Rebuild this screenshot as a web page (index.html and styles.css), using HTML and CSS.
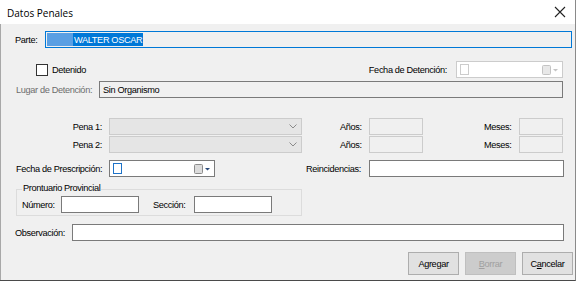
FILE: index.html
```html
<!DOCTYPE html>
<html lang="es">
<head>
    <meta charset="UTF-8">
    <title>Datos Penales</title>
    <link rel="stylesheet" href="styles.css">
</head>
<body>
    <div class="window">
        <div class="titlebar">
            <span class="title">Datos Penales</span>
            <svg class="close" width="12" height="12" viewBox="0 0 12 12">
                <path d="M1 1 L11 11 M11 1 L1 11" stroke="#222" stroke-width="1.1" fill="none"/>
            </svg>
        </div>

        <div class="content">
            <div class="row row-parte">
                <span class="lbl w-parte">Parte:</span>
                <div class="box focus w-parte-box">
                    <span class="sel"><span class="blur"></span>WALTER OSCAR</span>
                </div>
            </div>

            <div class="row row-det">
                <span class="check"></span>
                <span class="lbl chk-lbl">Detenido</span>
                <span class="spacer"></span>
                <span class="lbl">Fecha de Detención:</span>
                <div class="picker off w-det">
                    <span class="mini"></span>
                    <span class="spacer"></span>
                    <svg width="18" height="10" viewBox="0 0 18 10">
                        <rect x="0.5" y="0.5" width="8" height="9" rx="1" fill="#e8e8e8" stroke="#c4c4c4"/>
                        <path d="M11 4 L16 4 L13.5 6.5 Z" fill="#c4c4c4"/>
                    </svg>
                </div>
            </div>

            <div class="row row-lugar">
                <span class="lbl dim w-lugar">Lugar de Detención:</span>
                <div class="box ro w-lugar-box">Sin Organismo</div>
            </div>

            <div class="row row-pena1">
                <span class="lbl right w-pena">Pena 1:</span>
                <div class="combo">
                    <svg width="8" height="5" viewBox="0 0 8 5"><path d="M0.5 0.5 L4 4 L7.5 0.5" stroke="#8a8a8a" fill="none"/></svg>
                </div>
                <span class="lbl w-anios">Años:</span>
                <div class="box off w-anios-box"></div>
                <span class="lbl w-meses">Meses:</span>
                <div class="box off w-meses-box"></div>
            </div>

            <div class="row row-pena2">
                <span class="lbl right w-pena">Pena 2:</span>
                <div class="combo">
                    <svg width="8" height="5" viewBox="0 0 8 5"><path d="M0.5 0.5 L4 4 L7.5 0.5" stroke="#8a8a8a" fill="none"/></svg>
                </div>
                <span class="lbl w-anios">Años:</span>
                <div class="box off w-anios-box"></div>
                <span class="lbl w-meses">Meses:</span>
                <div class="box off w-meses-box"></div>
            </div>

            <div class="row row-presc">
                <span class="lbl w-presc">Fecha de Prescripción:</span>
                <div class="picker w-presc-box">
                    <span class="mini on"></span>
                    <span class="spacer"></span>
                    <svg width="18" height="10" viewBox="0 0 18 10">
                        <rect x="0.5" y="0.5" width="8" height="9" rx="1" fill="#dcdcdc" stroke="#8c8c8c"/>
                        <path d="M11 4 L16 4 L13.5 6.5 Z" fill="#2b4a7a"/>
                    </svg>
                </div>
                <span class="lbl w-reinc">Reincidencias:</span>
                <div class="box w-reinc-box"></div>
            </div>

            <div class="group">
                <span class="group-title">Prontuario Provincial</span>
                <div class="row">
                    <span class="lbl w-num">Número:</span>
                    <div class="box w-small"></div>
                    <span class="lbl w-secc">Sección:</span>
                    <div class="box w-small"></div>
                </div>
            </div>

            <div class="row row-obs">
                <span class="lbl w-obs">Observación:</span>
                <div class="box w-obs-box"></div>
            </div>

            <div class="buttons">
                <button class="btn">Agregar</button>
                <button class="btn" disabled><u>B</u>orrar</button>
                <button class="btn">C<u>a</u>ncelar</button>
            </div>
        </div>
    </div>
</body>
</html>
```

FILE: styles.css
```css
* {
    box-sizing: border-box;
}

body {
    margin: 0;
    font-family: 'Liberation Sans', Arial, sans-serif;
    font-size: 9.2px;
    letter-spacing: -0.35px;
    color: #000000;
    background-color: #ffffff;
}

.window {
    width: 576px;
    height: 281px;
    display: flex;
    flex-direction: column;
    border-right: 1px solid #8a8a8a;
    border-bottom: 1px solid #4a4a4a;
    overflow: hidden;
}

.titlebar {
    height: 24px;
    flex-shrink: 0;
    display: flex;
    align-items: center;
    justify-content: space-between;
    padding: 0 7px 0 7px;
    background-color: #ffffff;
}

.title {
    font-family: 'Open Sans', 'Noto Sans', sans-serif;
    font-size: 10px;
    letter-spacing: 0;
    color: #000000;
    padding-top: 1px;
}

.close {
    margin-right: 2px;
}

.content {
    flex: 1;
    background-color: #f0f0f0;
    border-left: 1px solid #a8a8a8;
}

.row {
    display: flex;
    align-items: center;
    height: 17px;
}

.lbl {
    white-space: nowrap;
    flex-shrink: 0;
}

.right {
    text-align: right;
    padding-right: 7px;
}

.dim {
    color: #6d6d6d;
}

.spacer {
    flex: 1;
}

.box {
    height: 17px;
    border: 1px solid #7a7a7a;
    background-color: #ffffff;
    display: flex;
    align-items: center;
    padding-left: 3px;
    flex-shrink: 0;
}

.box.ro {
    background-color: #f0f0f0;
}

.box.off {
    background-color: #f0f0f0;
    border-color: #cccccc;
}

.box.focus {
    background-color: #f0f0f0;
    border-color: #0078d7;
    padding-left: 1px;
}

.sel {
    display: flex;
    align-items: center;
    height: 13px;
    background-color: #0078d7;
    color: #ffffff;
    padding-right: 1px;
}

.blur {
    display: inline-block;
    width: 26px;
    height: 13px;
    background-color: #5a9fe3;
    margin-right: 1px;
}

.check {
    width: 12px;
    height: 12px;
    border: 1px solid #333333;
    background-color: #ffffff;
    flex-shrink: 0;
}

.chk-lbl {
    margin-left: 4px;
}

.picker {
    height: 17px;
    border: 1px solid #7a7a7a;
    background-color: #ffffff;
    display: flex;
    align-items: center;
    padding: 0 2px 0 3px;
    flex-shrink: 0;
}

.picker.off {
    border-color: #cccccc;
}

.mini {
    width: 9px;
    height: 11px;
    border: 1px solid #cccccc;
    background-color: #ffffff;
}

.mini.on {
    border-color: #1e73c8;
}

.combo {
    width: 193px;
    height: 17px;
    border: 1px solid #cccccc;
    background-color: #e5e5e5;
    display: flex;
    align-items: center;
    justify-content: flex-end;
    padding-right: 4px;
    flex-shrink: 0;
}

/* rows */
.row-parte {
    margin-top: 7px;
    padding-left: 14px;
}

.w-parte { width: 30px; }
.w-parte-box { width: 527px; }

.row-det {
    margin-top: 13px;
    padding-left: 35px;
    padding-right: 12px;
}

.row-det .picker { margin-left: 9px; }
.w-det { width: 107px; }

.row-lugar {
    margin-top: 3px;
    padding-left: 15px;
}

.w-lugar { width: 83px; }
.w-lugar-box { width: 464px; }

.row-pena1 {
    margin-top: 20px;
    padding-left: 15px;
}

.row-pena2 {
    margin-top: 1px;
    padding-left: 15px;
}

.w-pena { width: 93px; }

.w-anios {
    margin-left: 38px;
    width: 29px;
}

.w-anios-box { width: 54px; }

.w-meses {
    margin-left: 61px;
    width: 35px;
}

.w-meses-box { width: 44px; }

.row-presc {
    margin-top: 7px;
    padding-left: 15px;
}

.w-presc { width: 93px; }
.w-presc-box { width: 106px; }

.w-reinc {
    margin-left: 91px;
    width: 63px;
}

.w-reinc-box { width: 195px; }

/* group box */
.group {
    position: relative;
    margin-top: 12px;
    margin-left: 15px;
    width: 286px;
    height: 27px;
    border: 1px solid #dcdcdc;
    padding: 6px 0 0 5px;
}

.group-title {
    position: absolute;
    top: -7px;
    left: 5px;
    padding: 0 1px;
    background-color: #f0f0f0;
}

.w-num { width: 39px; }
.w-small { width: 78px; }

.w-secc {
    margin-left: 14px;
    width: 41px;
}

.row-obs {
    margin-top: 8px;
    padding-left: 14px;
}

.w-obs { width: 57px; }
.w-obs-box { width: 492px; }

/* buttons */
.buttons {
    display: flex;
    justify-content: flex-end;
    gap: 6px;
    margin-top: 11px;
    padding-right: 2px;
}

.btn {
    width: 51px;
    height: 23px;
    border: 1px solid #adadad;
    background-color: #e1e1e1;
    font-family: 'Liberation Sans', Arial, sans-serif;
    font-size: 9.2px;
    letter-spacing: -0.35px;
    color: #000000;
    padding: 0;
}

.btn:disabled {
    background-color: #cccccc;
    border-color: #bfbfbf;
    color: #a0a0a0;
}
```
